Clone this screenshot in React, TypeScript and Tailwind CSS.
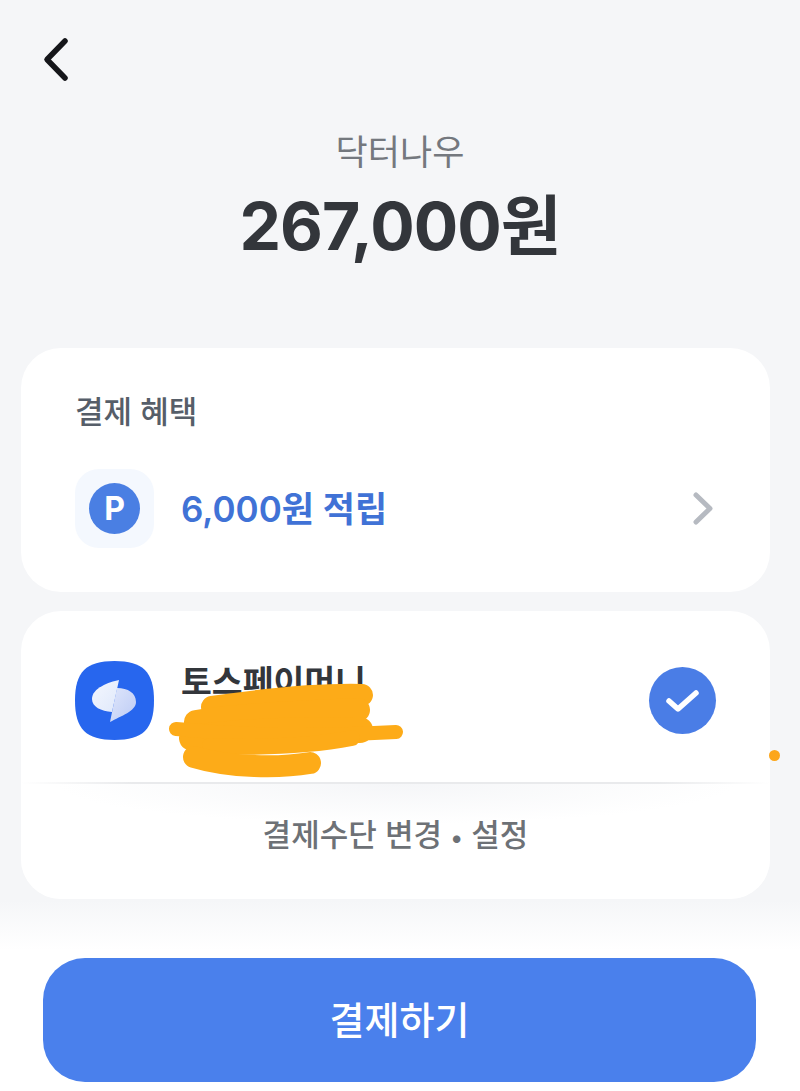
export default function App() {
    return (
        <div className="relative w-[800px] h-[1091px] overflow-hidden bg-[linear-gradient(#f5f6f8_900px,#ffffff_950px)] font-['Inter','Noto_Sans_CJK_KR',sans-serif]">
            {/* Back */}
            <div className="pl-[40px] pt-[36px] h-[128px]">
                <svg width="36" height="48" viewBox="0 0 36 48" fill="none" stroke="#15161a" strokeWidth="5.500" strokeLinecap="round" strokeLinejoin="round">
                    <path d="M25 5L7 23.500L25 42" />
                </svg>
            </div>

            {/* Merchant and amount */}
            <div className="flex flex-col items-center h-[220px] pt-[2px]">
                <div className="text-[35px] leading-[44px] text-[#74787e]">닥터나우</div>
                <div className="mt-[10px] text-[66px] leading-[84px] font-bold tracking-[-1px] text-[#33363b]">267,000원</div>
            </div>

            {/* Benefits */}
            <div className="mx-[21px] w-[749px] h-[244px] rounded-[40px] bg-white px-[54px] pt-[43px]">
                <div className="text-[31px] leading-[42px] font-medium text-[#565e69]">결제 혜택</div>
                <div className="mt-[36px] flex items-center">
                    <div className="flex items-center justify-center w-[79px] h-[79px] rounded-[24px] bg-[#f4f8fe]">
                        <div className="flex items-center justify-center w-[51px] h-[51px] rounded-full bg-[#4a7fe3] text-[32px] leading-none font-bold text-white">P</div>
                    </div>
                    <div className="ml-[27px] text-[35px] leading-[48px] font-semibold text-[#4072d6]">6,000원 적립</div>
                    <svg className="ml-auto mr-[1px]" width="24" height="36" viewBox="0 0 24 36" fill="none" stroke="#b6bac1" strokeWidth="5" strokeLinecap="round" strokeLinejoin="round">
                        <path d="M5 4L19 17.500L5 31" />
                    </svg>
                </div>
            </div>

            {/* Payment method */}
            <div className="mx-[21px] mt-[19px] w-[749px] h-[288px] rounded-[40px] bg-white overflow-hidden">
                <div className="flex h-[171px] items-start px-[54px] pt-[50px]">
                    <svg width="79" height="79" viewBox="0 0 79 79">
                        <defs>
                            <linearGradient id="toss-left" x1="0" y1="0" x2="1" y2="1">
                                <stop offset="0" stopColor="#f4f7fe" />
                                <stop offset="1" stopColor="#dfe8fb" />
                            </linearGradient>
                            <linearGradient id="toss-right" x1="0" y1="0" x2="1" y2="1">
                                <stop offset="0" stopColor="#dfe6fb" />
                                <stop offset="1" stopColor="#bccbf5" />
                            </linearGradient>
                        </defs>
                        <path d="M39.500 0C68 0 79 11 79 39.500S68 79 39.500 79S0 68 0 39.500S11 0 39.500 0Z" fill="#2766ee" />
                        <path d="M44 19L37 51C26 50 17 46 17 38C17 27 34 21 44 19Z" fill="url(#toss-left)" />
                        <path d="M42 27C53 27 61 32 61 41C61 50 46 55 35 61Z" fill="url(#toss-right)" />
                    </svg>
                    <div className="ml-[27px] mt-[-1px] text-[33.500px] leading-[44px] font-bold text-[#33363b]">토스페이머니</div>
                    <div className="ml-auto mt-[6px] flex items-center justify-center w-[67px] h-[67px] rounded-full bg-[#4a7de6]">
                        <svg width="36" height="28" viewBox="0 0 36 28" fill="none" stroke="#ffffff" strokeWidth="5.500" strokeLinecap="round" strokeLinejoin="round">
                            <path d="M4 14L13 22L31 6" />
                        </svg>
                    </div>
                </div>
                <div className="h-[2px] bg-[linear-gradient(to_right,#ffffff,#e9eaec_15%,#e9eaec_85%,#ffffff)]" />
                <div className="flex h-[115px] justify-center pt-[29px] bg-[radial-gradient(ellipse_340px_40px_at_50%_0px,#f5f6f8,#ffffff)]">
                    <div className="text-[31px] leading-[44px] font-medium text-[#6d7176]">결제수단 변경 <span className="text-[24px]">•</span> 설정</div>
                </div>
            </div>

            {/* Pay */}
            <div className="mx-[43px] mt-[59px] flex items-center justify-center w-[713px] h-[124px] rounded-[42px] bg-[#4a80ec]">
                <div className="text-[38px] leading-[50px] font-medium text-white">결제하기</div>
            </div>

            {/* Orange marker over the account details */}
            <svg className="absolute left-0 top-0 pointer-events-none" width="800" height="1091" viewBox="0 0 800 1091" fill="none" stroke="#fdab18" strokeLinecap="round" strokeLinejoin="round">
                <path d="M212 707C260 700 320 694 362 695" strokeWidth="22" />
                <path d="M196 722C250 714 310 712 358 710" strokeWidth="24" />
                <path d="M192 738C250 730 310 730 360 730" strokeWidth="26" />
                <path d="M176 729C250 736 330 736 396 732" strokeWidth="14" />
                <path d="M210 746C260 748 310 746 352 738" strokeWidth="16" />
                <path d="M194 757C230 768 280 768 310 763" strokeWidth="22" />
            </svg>
            <div className="absolute left-[769px] top-[750px] w-[11px] h-[11px] rounded-full bg-[#fca61a]" />
        </div>
    );
}
